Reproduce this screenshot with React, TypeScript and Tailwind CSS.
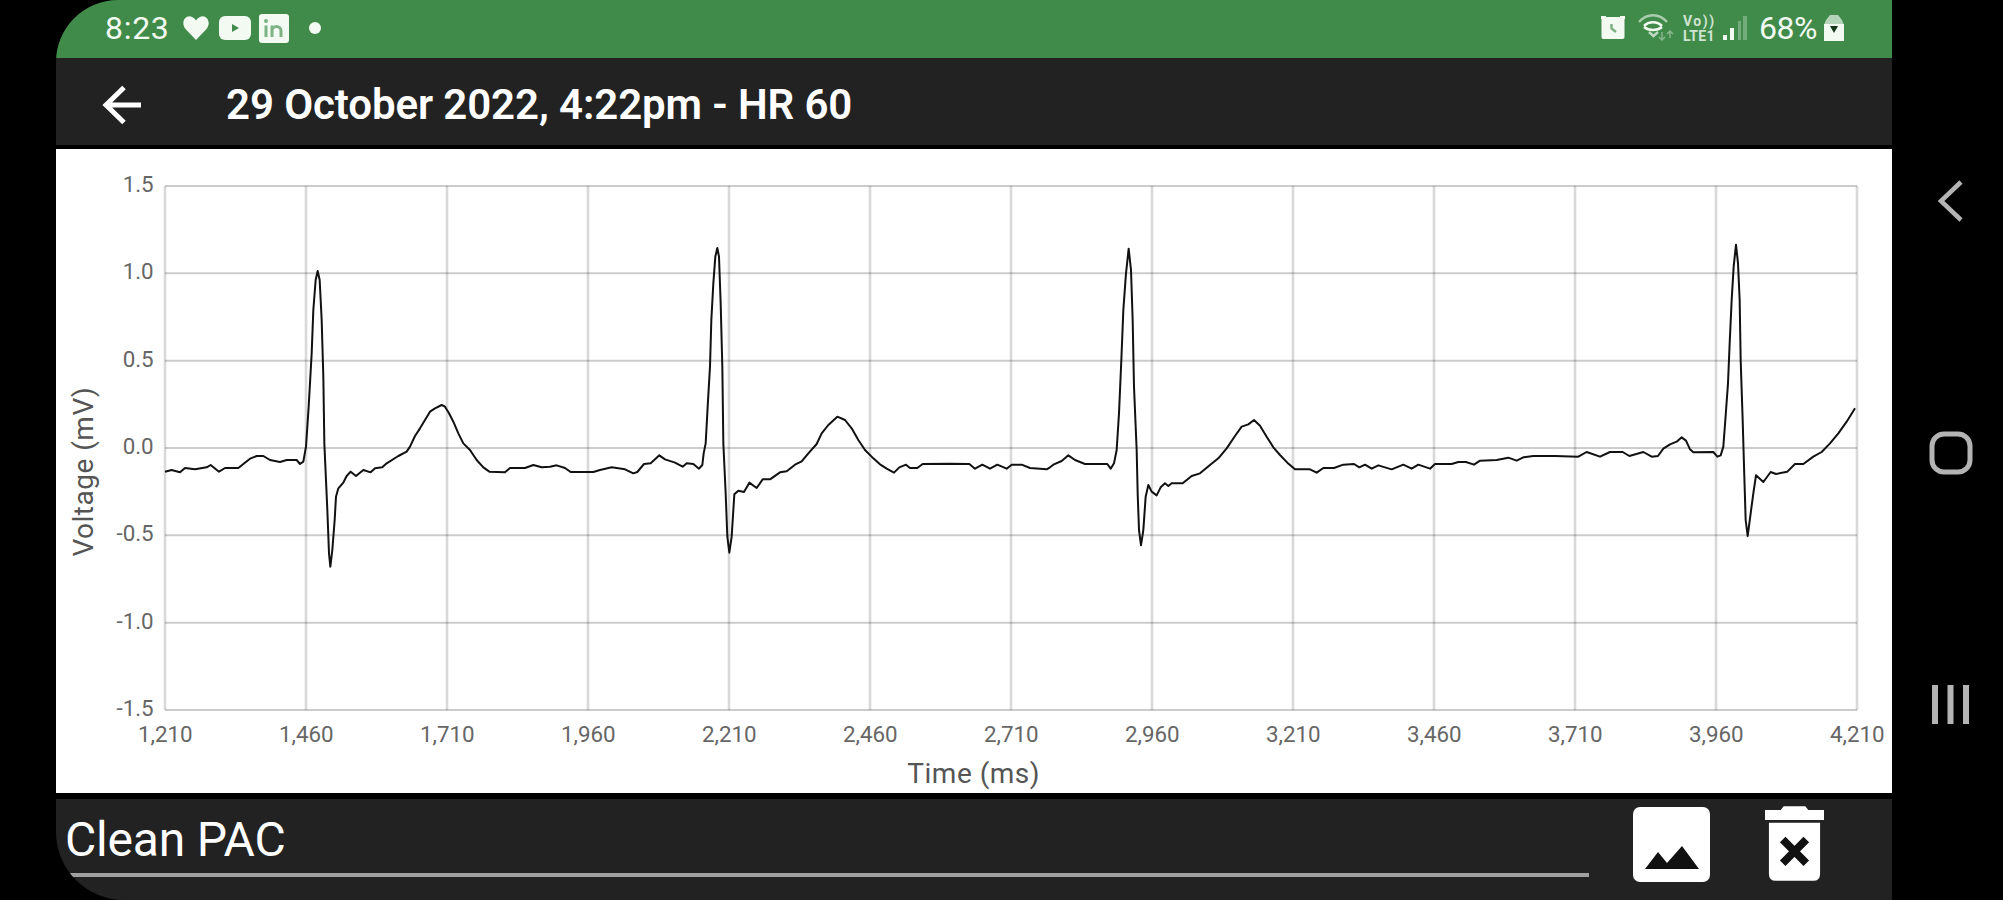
import React from "react";

// chart units: three per pixel
const GRID = { left: 345, right: 5421, top: 78, bottom: 1650 };
const X_STEP = (GRID.right - GRID.left) / 12;
const Y_STEP = (GRID.bottom - GRID.top) / 6;

const timeTicks = ["1,210", "1,460", "1,710", "1,960", "2,210", "2,460", "2,710", "2,960", "3,210", "3,460", "3,710", "3,960", "4,210"];
const voltageTicks = ["1.5", "1.0", "0.5", "0.0", "-0.5", "-1.0", "-1.5"];

type Segment = {
  offset: number;
  samples: string;
};

const segments: Segment[] = [
  {
    offset: 0,
    samples:
      "345,935 365,930 390,937 405,924 435,928 470,922 482,915 507,935 525,924 565,924 580,912 600,896 620,888 640,888 660,900 690,906 710,900 740,900 750,912 760,905 768,860 776,740 785,580 790,450 797,360 803,333 809,360 815,480 820,650 823,850 832,1050 837,1180 841,1220 847,1170 854,1080 858,1010 865,985 880,968 890,948 902,935 918,948 940,930 962,937 975,925 997,922 1010,910 1045,888 1070,875 1080,860 1095,828 1110,805 1125,780 1140,755 1155,745 1175,735 1185,740 1197,760 1210,785 1225,820 1240,850 1260,870 1280,900 1300,922 1318,935 1365,937 1380,924 1425,924 1450,915 1475,922",
  },
  {
    offset: 1500,
    samples:
      "0,920 20,916 45,924 62,936 130,936 150,930 185,922 225,928 250,940 262,936 282,912 302,910 328,886 345,898 375,908 398,920 410,910 430,912 447,926 457,915 461,880 467,850 473,740 480,620 484,480 490,370 496,290 502,264 507,290 512,430 517,620 520,850 527,1000 532,1130 538,1178 545,1130 550,1050 553,1003 565,992 582,996 598,968 620,984 638,958 660,958 690,937 710,934 735,914 755,904 775,880 800,852 815,820 835,795 862,770 885,780 905,805 925,840 945,870 970,895 990,913 1010,926 1032,938 1048,922 1068,914 1080,924 1102,924 1118,912 1200,911 1258,912 1275,926 1297,914 1320,926 1342,914 1370,926 1385,914 1415,914 1440,924 1490,928",
  },
  {
    offset: 3000,
    samples:
      "0,922 10,914 35,903 55,886 75,900 105,912 172,912 182,926 192,910 200,870 207,760 214,600 220,450 228,340 236,266 243,330 248,480 252,680 260,870 263,1000 267,1110 273,1156 280,1110 287,1010 295,975 305,995 320,1006 332,982 345,970 355,978 365,970 398,970 425,948 450,940 480,915 505,895 530,865 555,828 575,800 595,793 612,780 630,797 650,830 670,862 690,885 712,908 735,928 780,928 800,938 820,924 852,924 880,914 912,912 928,922 945,914 965,926 985,916 1025,928 1060,914 1085,926 1105,914 1140,926 1155,912 1205,912 1225,906 1248,906 1272,914 1290,902 1340,900 1375,893 1400,902 1420,892 1450,888 1500,888",
  },
  {
    offset: 4350,
    samples:
      "165,888 235,890 260,876 300,890 330,876 368,876 388,888 430,876 455,890 474,888 490,866 510,853 530,845 545,832 558,842 570,868 580,877 640,876 652,890 662,886 670,860 676,780 684,670 689,550 695,420 701,320 708,254 714,310 719,420 722,600 728,780 733,950 737,1080 743,1128 752,1060 760,1000 768,946 790,966 812,936 828,942 862,935 885,912 910,912 940,890 965,876 990,850 1015,820 1040,785 1065,745",
  },
];

const tracePoints = segments
  .flatMap(({ offset, samples }) =>
    samples.split(" ").map((pair) => {
      const [x, y] = pair.split(",").map(Number);
      return `${x + offset},${y}`;
    })
  )
  .join(" ");

function StatusBar() {
  return (
    <div className="flex h-[58px] items-center justify-between bg-[#408b4a] pb-[2px] pl-[49px] pr-[48px] text-[#f2faf2]">
      <div className="flex items-center">
        <span className="w-[68px] text-[32px] leading-none tracking-[0.7px]">8:23</span>
        <svg className="ml-[10px] h-[24px] w-[26px]" viewBox="0 0 26 24" fill="currentColor">
          <path d="M13 24 2.500 13C-3 6 3-2 9 1c2 .8 3.200 2 4 3.500C13.800 3 15 1.800 17 1c6-3 12 5 6.500 12z" />
        </svg>
        <svg className="ml-[10px] h-[24px] w-[32px]" viewBox="0 0 32 24">
          <rect width="32" height="24" rx="6" fill="currentColor" />
          <path d="M13 8v8l7-4z" fill="#408b4a" />
        </svg>
        <svg className="ml-[8px] h-[29px] w-[30px]" viewBox="0 0 30 29">
          <rect width="30" height="29" rx="3" fill="currentColor" />
          <path d="M7 11.500V23M13 23V11.500M13 17c0-6 9-6 9 0v6" fill="none" stroke="#7db384" strokeWidth="3" />
          <circle cx="7" cy="7" r="2" fill="#7db384" />
        </svg>
        <span className="ml-[20px] size-[12px] rounded-full bg-current" />
      </div>

      <div className="flex items-center">
        <svg className="h-[24px] w-[24px]" viewBox="0 0 24 24">
          <rect x=".5" y="1" width="23" height="22" rx="2" fill="currentColor" />
          <path d="M0 0h5v3H0zM19 0h5v3h-5z" fill="currentColor" />
          <path d="M10.500 8v4.500l4.500 3.500" fill="none" stroke="#7db384" strokeWidth="2.500" />
        </svg>
        <svg className="ml-[13px] h-[30px] w-[36px]" viewBox="0 0 36 30" fill="none" stroke="currentColor" strokeWidth="2.500">
          <path d="M1 9C9 0 21 0 29 9" opacity=".6" />
          <path d="M6 13c5-5 13-5 18 0" />
          <path d="M6 14c5 4 13 4 18 0" />
          <path d="m11 19 4.500 4 4.500-4" opacity=".7" />
          <path d="M24 19v8m-3-3 3 3 3-3M32 25v-7m-3 3 3-3 3 3" strokeWidth="1.500" opacity=".4" />
        </svg>
        <div className="ml-[9px] flex w-[36px] flex-col pt-[2px] text-[14px] font-bold leading-[15px] tracking-[0.3px] opacity-80">
          <span className="tracking-[1.500px]">Vo))</span>
          <span>LTE1</span>
        </div>
        <svg className="ml-[4px] h-[24px] w-[26px]" viewBox="0 0 26 24" fill="currentColor">
          <path d="M0 19h4v5H0zM7 12h4v12H7z" />
          <path d="M15 5h3v19h-3zM20 0h4v24h-4z" opacity=".3" />
        </svg>
        <span className="ml-[10px] w-[65px] text-[32px] leading-none tracking-[-0.5px]">68%</span>
        <svg className="h-[26px] w-[20px]" viewBox="0 0 20 26">
          <path d="M6 0h8l4 5 2 5H0l2-5z" fill="currentColor" opacity=".65" />
          <path d="M0 9h20v17H0z" fill="currentColor" />
          <path d="M6 11h8l-4 7z" fill="#14381a" />
        </svg>
      </div>
    </div>
  );
}

function TitleBar() {
  return (
    <header className="flex h-[87px] items-center bg-[#222222] pl-[46px] pt-[6px] text-white">
      <svg className="h-[40px] w-[40px]" viewBox="0 0 40 40" fill="none" stroke="currentColor" strokeWidth="5">
        <path d="M39 20H4M22 2.500 4 20l18 17.500" />
      </svg>
      <h1 className="ml-[84px] whitespace-nowrap text-[42px] font-semibold leading-none tracking-[-0.1px]">29 October 2022, 4:22pm - HR 60</h1>
    </header>
  );
}

function EcgChart() {
  return (
    <svg className="h-[644px] w-[1836px] bg-white" viewBox="18 -33 5508 1932">
      <g stroke="#000" strokeOpacity=".15" strokeWidth="8">
        {timeTicks.map((label, i) => (
          <line key={label} x1={GRID.left + i * X_STEP} x2={GRID.left + i * X_STEP} y1={GRID.top} y2={GRID.bottom} />
        ))}
      </g>
      <g stroke="#000" strokeOpacity=".2" strokeWidth="6">
        {voltageTicks.map((label, i) => (
          <line key={label} x1={GRID.left} x2={GRID.right} y1={GRID.top + i * Y_STEP} y2={GRID.top + i * Y_STEP} />
        ))}
      </g>
      <g fill="#666" fontSize="67">
        {voltageTicks.map((label, i) => (
          <text key={label} x="311" y={GRID.top + 18 + i * Y_STEP} textAnchor="end">
            {label}
          </text>
        ))}
        {timeTicks.map((label, i) => (
          <text key={label} x={GRID.left + 1 + i * X_STEP} y="1745" textAnchor="middle">
            {label}
          </text>
        ))}
      </g>
      <g fill="#555" fontSize="84" letterSpacing="1.500" textAnchor="middle">
        <text x="2771" y="1869">
          Time (ms)
        </text>
        <text transform="translate(130 935) rotate(-90)">Voltage (mV)</text>
      </g>
      <polyline points={tracePoints} fill="none" stroke="#111" strokeWidth="6" strokeLinejoin="round" />
    </svg>
  );
}

function NoteBar() {
  return (
    <footer className="flex h-[101px] bg-[#222222] text-white">
      <div className="ml-[8px] mt-[17px] flex w-[1525px] flex-col">
        <span className="h-[57px] pl-px text-[48px] leading-[48px] tracking-[-0.2px]">Clean PAC</span>
        <span className="ml-[6px] h-[4px] bg-[#a0a0a0]" />
      </div>
      <svg className="ml-[44px] mt-[8px] h-[75px] w-[77px]" viewBox="0 0 77 75">
        <rect width="77" height="75" rx="7" fill="#fff" />
        <path d="M12 62 25 45l9 11 15-17 17 23z" fill="#111" />
      </svg>
      <svg className="ml-[55px] mt-[7px] h-[75px] w-[59px]" viewBox="0 0 60 76">
        <path d="M0 4h16l3-4h22l3 4h16v10H0zM4 17h52v52q0 7-7 7H11q-7 0-7-7z" fill="#fff" />
        <path d="m18 34 24 24M42 34 18 58" stroke="#111" strokeWidth="8" />
      </svg>
    </footer>
  );
}

function NavigationBar() {
  return (
    <nav className="flex h-[900px] w-[111px] flex-col items-center justify-between pb-[174px] pl-[7px] pt-[179px] text-[#b4b4b4]">
      <svg className="size-[44px]" viewBox="0 0 44 44" fill="none" stroke="currentColor" strokeWidth="4.500">
        <path d="M32 3 12 22l20 19" />
      </svg>
      <svg className="size-[44px]" viewBox="0 0 44 44" fill="none" stroke="currentColor" strokeWidth="5">
        <rect x="3" y="3" width="38" height="38" rx="12" />
      </svg>
      <svg className="size-[44px]" viewBox="0 0 44 44" fill="currentColor">
        <path d="M3 3h6v39H3zM18.500 3h6v39h-6zM34 3h6v39h-6z" />
      </svg>
    </nav>
  );
}

export default function App() {
  return (
    <div className="flex h-[900px] w-[2003px] overflow-hidden bg-black pl-[56px] font-['Roboto',sans-serif]">
      <main className="flex h-[900px] w-[1836px] shrink-0 flex-col overflow-hidden rounded-bl-[68px] rounded-tl-[62px]">
        <StatusBar />
        <TitleBar />
        <div className="h-[4px] bg-black" />
        <EcgChart />
        <div className="h-[6px] bg-black" />
        <NoteBar />
      </main>
      <NavigationBar />
    </div>
  );
}
